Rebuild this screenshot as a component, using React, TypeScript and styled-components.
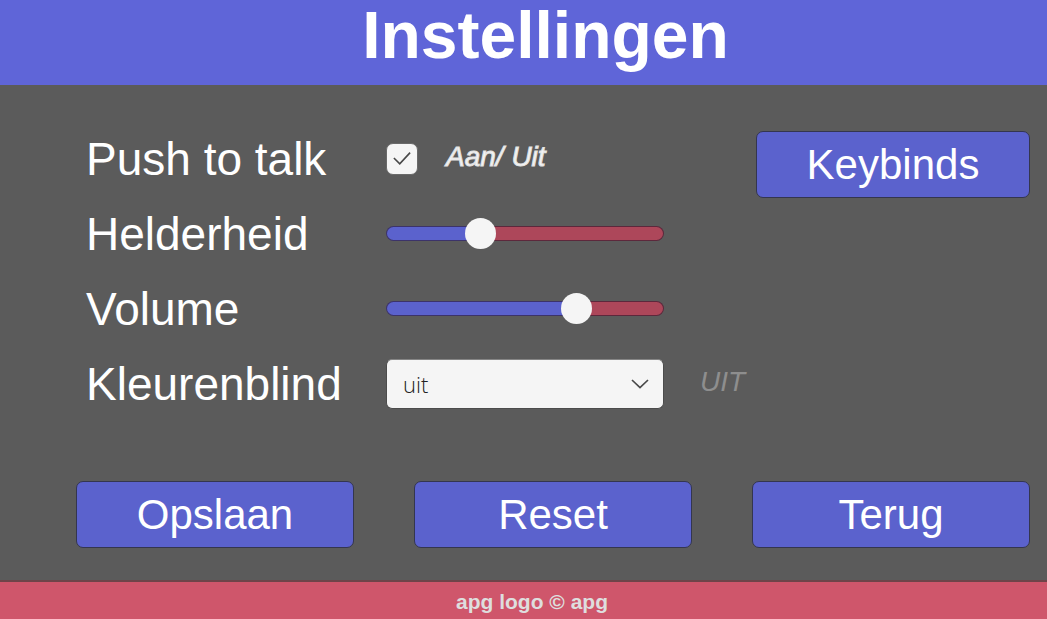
import React, { useState } from "react";
import styled, { createGlobalStyle } from "styled-components";

const GlobalStyle = createGlobalStyle`
  *, *::before, *::after { box-sizing: border-box; }
  body {
    margin: 0;
    background: #5b5b5b;
    font-family: "Liberation Sans", Arial, sans-serif;
  }
`;

const Page = styled.div`
  display: flex;
  flex-direction: column;
  min-height: 100vh;
`;

const Header = styled.header`
  height: 85px;
  padding-left: 44px;
  background: #5f65d8;
  text-align: center;
`;

const Title = styled.h1`
  margin: 0;
  font-size: 66px;
  line-height: 70px;
  font-weight: 700;
  color: #ffffff;
`;

const Main = styled.main`
  flex: 1;
  display: flex;
  flex-direction: column;
  justify-content: space-between;
  gap: 60px;
  padding: 36px 17px 32px 76px;
`;

const Top = styled.div`
  display: flex;
  justify-content: space-between;
`;

const Settings = styled.div`
  padding-left: 10px;
`;

const Row = styled.div`
  display: grid;
  grid-template-columns: 300px 278px auto;
  align-items: center;
  height: 75px;
`;

const Label = styled.label`
  font-size: 46px;
  line-height: 52px;
  color: #ffffff;
  white-space: nowrap;
`;

const CheckGroup = styled.div`
  display: flex;
  align-items: center;
  gap: 28px;
`;

const CheckWrap = styled.span`
  display: grid;
  width: 32px;
  height: 32px;

  > * {
    grid-area: 1 / 1;
  }

  svg {
    place-self: center;
    pointer-events: none;
  }
`;

const Checkbox = styled.input`
  appearance: none;
  width: 32px;
  height: 32px;
  margin: 0;
  border: 1px solid #6a6a6a;
  border-radius: 7px;
  background: #f5f5f5;
`;

const Hint = styled.output<{ $muted?: boolean }>`
  padding-left: ${(p) => (p.$muted ? "36px" : "0")};
  padding-bottom: 4px;
  font-size: 28px;
  line-height: 32px;
  font-style: italic;
  white-space: nowrap;
  color: ${(p) => (p.$muted ? "#8e8e8e" : "#f5f5f5")};
  -webkit-text-stroke: ${(p) => (p.$muted ? "0" : "1px #e2e2e2")};
`;

const Slider = styled.input<{ $value: number }>`
  appearance: none;
  width: 100%;
  height: 31px;
  margin: 0;
  background: transparent;

  &::-webkit-slider-runnable-track {
    height: 15px;
    border: 1px solid rgba(40, 20, 40, 0.6);
    border-radius: 8px;
    background: linear-gradient(
      to right,
      #5b62cd ${(p) => p.$value}%,
      #ad475a ${(p) => p.$value}%
    );
    background-clip: border-box;
    background-origin: border-box;
  }

  &::-webkit-slider-thumb {
    appearance: none;
    width: 31px;
    height: 31px;
    margin-top: -9px;
    border-radius: 50%;
    background: #f5f5f5;
  }
`;

const SelectWrap = styled.div`
  display: grid;
  align-items: center;

  > * {
    grid-area: 1 / 1;
  }

  svg {
    justify-self: end;
    margin-right: 15px;
    pointer-events: none;
  }
`;

const Select = styled.select`
  appearance: none;
  width: 100%;
  height: 50px;
  padding: 0 16px;
  border: 1px solid #4c4c4c;
  border-top-color: #858585;
  border-radius: 6px;
  background: #f5f5f5;
  color: #222222;
  font-family: "Open Sans", "Noto Sans", sans-serif;
  font-weight: 300;
  font-size: 22px;
`;

const Button = styled.button`
  height: 67px;
  padding: 0;
  border: 1px solid #34364f;
  border-radius: 7px;
  background: #5b62cd;
  color: #ffffff;
  font-family: inherit;
  font-size: 42px;
  line-height: 48px;
`;

const Side = styled.div`
  display: grid;
  align-content: start;
  width: 274px;
  padding-top: 10px;
`;

const Actions = styled.div`
  display: grid;
  grid-template-columns: repeat(3, 1fr);
  gap: 60px;
`;

const Footer = styled.footer`
  height: 40px;
  padding: 2px 0 0 17px;
  border-top: 2px solid #6e4449;
  background: #cf566b;
  color: #dedede;
  font-size: 21px;
  line-height: 36px;
  font-weight: 700;
  text-align: center;
`;

const CheckIcon = () => (
  <svg width="18" height="15" viewBox="0 0 20 16" fill="none" aria-hidden="true">
    <path d="M1 7.5L7.5 14L19 1.5" stroke="#484848" strokeWidth="1.8" />
  </svg>
);

const ChevronIcon = () => (
  <svg width="18" height="10" viewBox="0 0 18 10" fill="none" aria-hidden="true">
    <path d="M1 1L9 8.5L17 1" stroke="#484848" strokeWidth="1.7" />
  </svg>
);

export default function App() {
  const [talk, setTalk] = useState(true);
  const [brightness, setBrightness] = useState(32);
  const [volume, setVolume] = useState(71);
  const [colorblind, setColorblind] = useState("uit");

  return (
    <>
      <GlobalStyle />
      <Page>
        <Header>
          <Title>Instellingen</Title>
        </Header>
        <Main>
          <Top>
            <Settings>
              <Row>
                <Label htmlFor="talk">Push to talk</Label>
                <CheckGroup>
                  <CheckWrap>
                    <Checkbox
                      id="talk"
                      type="checkbox"
                      checked={talk}
                      onChange={(e) => setTalk(e.target.checked)}
                    />
                    {talk && <CheckIcon />}
                  </CheckWrap>
                  <Hint>Aan/ Uit</Hint>
                </CheckGroup>
              </Row>
              <Row>
                <Label htmlFor="brightness">Helderheid</Label>
                <Slider
                  id="brightness"
                  type="range"
                  value={brightness}
                  $value={brightness}
                  onChange={(e) => setBrightness(Number(e.target.value))}
                />
              </Row>
              <Row>
                <Label htmlFor="volume">Volume</Label>
                <Slider
                  id="volume"
                  type="range"
                  value={volume}
                  $value={volume}
                  onChange={(e) => setVolume(Number(e.target.value))}
                />
              </Row>
              <Row>
                <Label htmlFor="colorblind">Kleurenblind</Label>
                <SelectWrap>
                  <Select
                    id="colorblind"
                    value={colorblind}
                    onChange={(e) => setColorblind(e.target.value)}
                  >
                    <option value="uit">uit</option>
                    <option value="aan">aan</option>
                  </Select>
                  <ChevronIcon />
                </SelectWrap>
                <Hint $muted>{colorblind.toUpperCase()}</Hint>
              </Row>
            </Settings>
            <Side>
              <Button type="button">Keybinds</Button>
            </Side>
          </Top>
          <Actions>
            <Button type="button">Opslaan</Button>
            <Button type="button">Reset</Button>
            <Button type="button">Terug</Button>
          </Actions>
        </Main>
        <Footer>apg logo © apg</Footer>
      </Page>
    </>
  );
}
